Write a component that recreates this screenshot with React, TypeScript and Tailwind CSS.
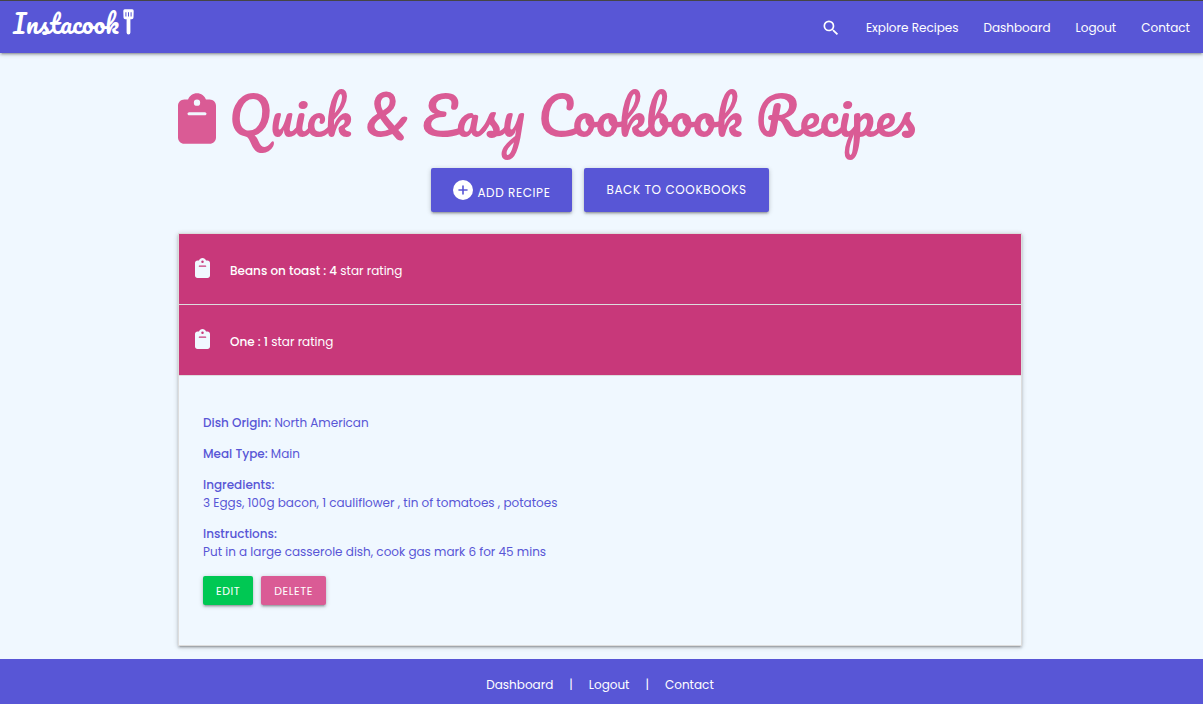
import { FaClipboard } from 'react-icons/fa6';
import { MdSearch } from 'react-icons/md';

const raised =
  'shadow-[0_2px_2px_0_rgba(0,0,0,0.14),0_3px_1px_-2px_rgba(0,0,0,0.12),0_1px_5px_0_rgba(0,0,0,0.2)]';

const script = "font-['Pacifico','Lato',cursive] font-normal";

function Spatula() {
  return (
    <svg viewBox="0 0 11 26" className="h-[26px] w-[11px]" fill="currentColor" aria-hidden="true">
      <path
        fillRule="evenodd"
        d="M1.800 .3h7.400a1.500 1.500 0 0 1 1.500 1.600L10.500 8.500A1.800 1.800 0 0 1 8.700 10.300H7.400V23.600a1.900 1.900 0 0 1-3.800 0V10.300H2.300A1.800 1.800 0 0 1 .5 8.500L.3 1.900A1.500 1.500 0 0 1 1.800 .3ZM2.400 3.200v4.200h1V3.200ZM5 3.200v4.200h1V3.200ZM7.600 3.200v4.200h1V3.200Z"
      />
    </svg>
  );
}

function PlusCircle() {
  return (
    <svg viewBox="0 0 20 20" className="size-5" aria-hidden="true">
      <circle cx="10" cy="10" r="10" fill="currentColor" />
      <path d="M10 6v8M6 10h8" stroke="#5856d6" strokeWidth="1.600" strokeLinecap="round" />
    </svg>
  );
}

const recipes = [
  { name: 'Beans on toast', rating: 4 },
  { name: 'One', rating: 1 },
];

export default function App() {
  return (
    <div className="flex min-h-screen flex-col bg-[#f0f8ff] font-['Poppins','Inter',sans-serif] text-xs text-[#5856d6]">
      <header className={`relative flex h-[53px] items-center justify-between border-t border-[#454545] bg-[#5856d6] px-[13px] text-white ${raised}`}>
        <a href="#home" className="flex items-start gap-1 pb-2">
          <span className={`${script} text-[26px] leading-7`}>Instacook</span>
          <Spatula />
        </a>
        <nav className="flex items-center gap-[25px] pt-px">
          <a href="#search" aria-label="Search">
            <MdSearch className="size-5" />
          </a>
          <a href="#explore">Explore Recipes</a>
          <a href="#dashboard">Dashboard</a>
          <a href="#logout">Logout</a>
          <a href="#contact">Contact</a>
        </nav>
      </header>

      <div className="flex grow justify-center pr-[3px]">
        <main className="w-[844px] max-w-[90%] pt-7 pb-3">
          <h1 className={`flex items-center gap-[13px] text-[#da5b95] ${script} text-[51px] leading-[70px] whitespace-nowrap`}>
            <FaClipboard className="mt-1 h-[51px] w-[38px] shrink-0" />
            Quick &amp; Easy Cookbook Recipes
          </h1>

          <div className="mt-[17px] flex justify-center gap-3 text-white">
            <button type="button" className={`flex h-11 items-center gap-1 rounded-xs bg-[#5856d6] px-[22px] tracking-wider uppercase ${raised}`}>
              <PlusCircle />
              <span className="pt-1.5">Add Recipe</span>
            </button>
            <button type="button" className={`h-11 rounded-xs bg-[#5856d6] px-[22px] tracking-wider uppercase ${raised}`}>
              Back to Cookbooks
            </button>
          </div>

          <section className={`mt-[21px] border border-[#dddddd] ${raised}`}>
            {recipes.map((recipe) => (
              <button
                key={recipe.name}
                type="button"
                className="flex h-[71px] w-full items-center gap-5 border-b border-[#dddddd] bg-[#c8387a] px-4 text-left text-white"
              >
                <FaClipboard className="mb-0.5 h-5 w-[15px] text-[#f0f8ff]" />
                <span className="pt-1">
                  <span className="font-medium">
                    {recipe.name} : {recipe.rating}
                  </span>{' '}
                  star rating
                </span>
              </button>
            ))}
            <div className="flex flex-col gap-[13px] px-6 pt-[38px] pb-10 leading-[18px]">
              <p>
                <strong className="font-medium">Dish Origin:</strong> North American
              </p>
              <p>
                <strong className="font-medium">Meal Type:</strong> Main
              </p>
              <p>
                <strong className="font-medium">Ingredients:</strong>
                <br />3 Eggs, 100g bacon, 1 cauliflower , tin of tomatoes , potatoes
              </p>
              <p>
                <strong className="font-medium">Instructions:</strong>
                <br />
                Put in a large casserole dish, cook gas mark 6 for 45 mins
              </p>
              <div className="mt-0.5 flex gap-2 text-[11px] text-white">
                <button type="button" className={`h-[29px] rounded-xs bg-[#00c853] px-[13px] tracking-wider uppercase ${raised}`}>
                  Edit
                </button>
                <button type="button" className={`h-[29px] rounded-xs bg-[#da5b95] px-[13px] tracking-wider uppercase ${raised}`}>
                  Delete
                </button>
              </div>
            </div>
          </section>
        </main>
      </div>

      <footer className="flex h-[45px] items-center justify-center gap-4 bg-[#5856d6] pt-1.5 pr-[3px] text-white">
        <a href="#dashboard">Dashboard</a>
        <span>|</span>
        <a href="#logout">Logout</a>
        <span>|</span>
        <a href="#contact">Contact</a>
      </footer>
    </div>
  );
}
